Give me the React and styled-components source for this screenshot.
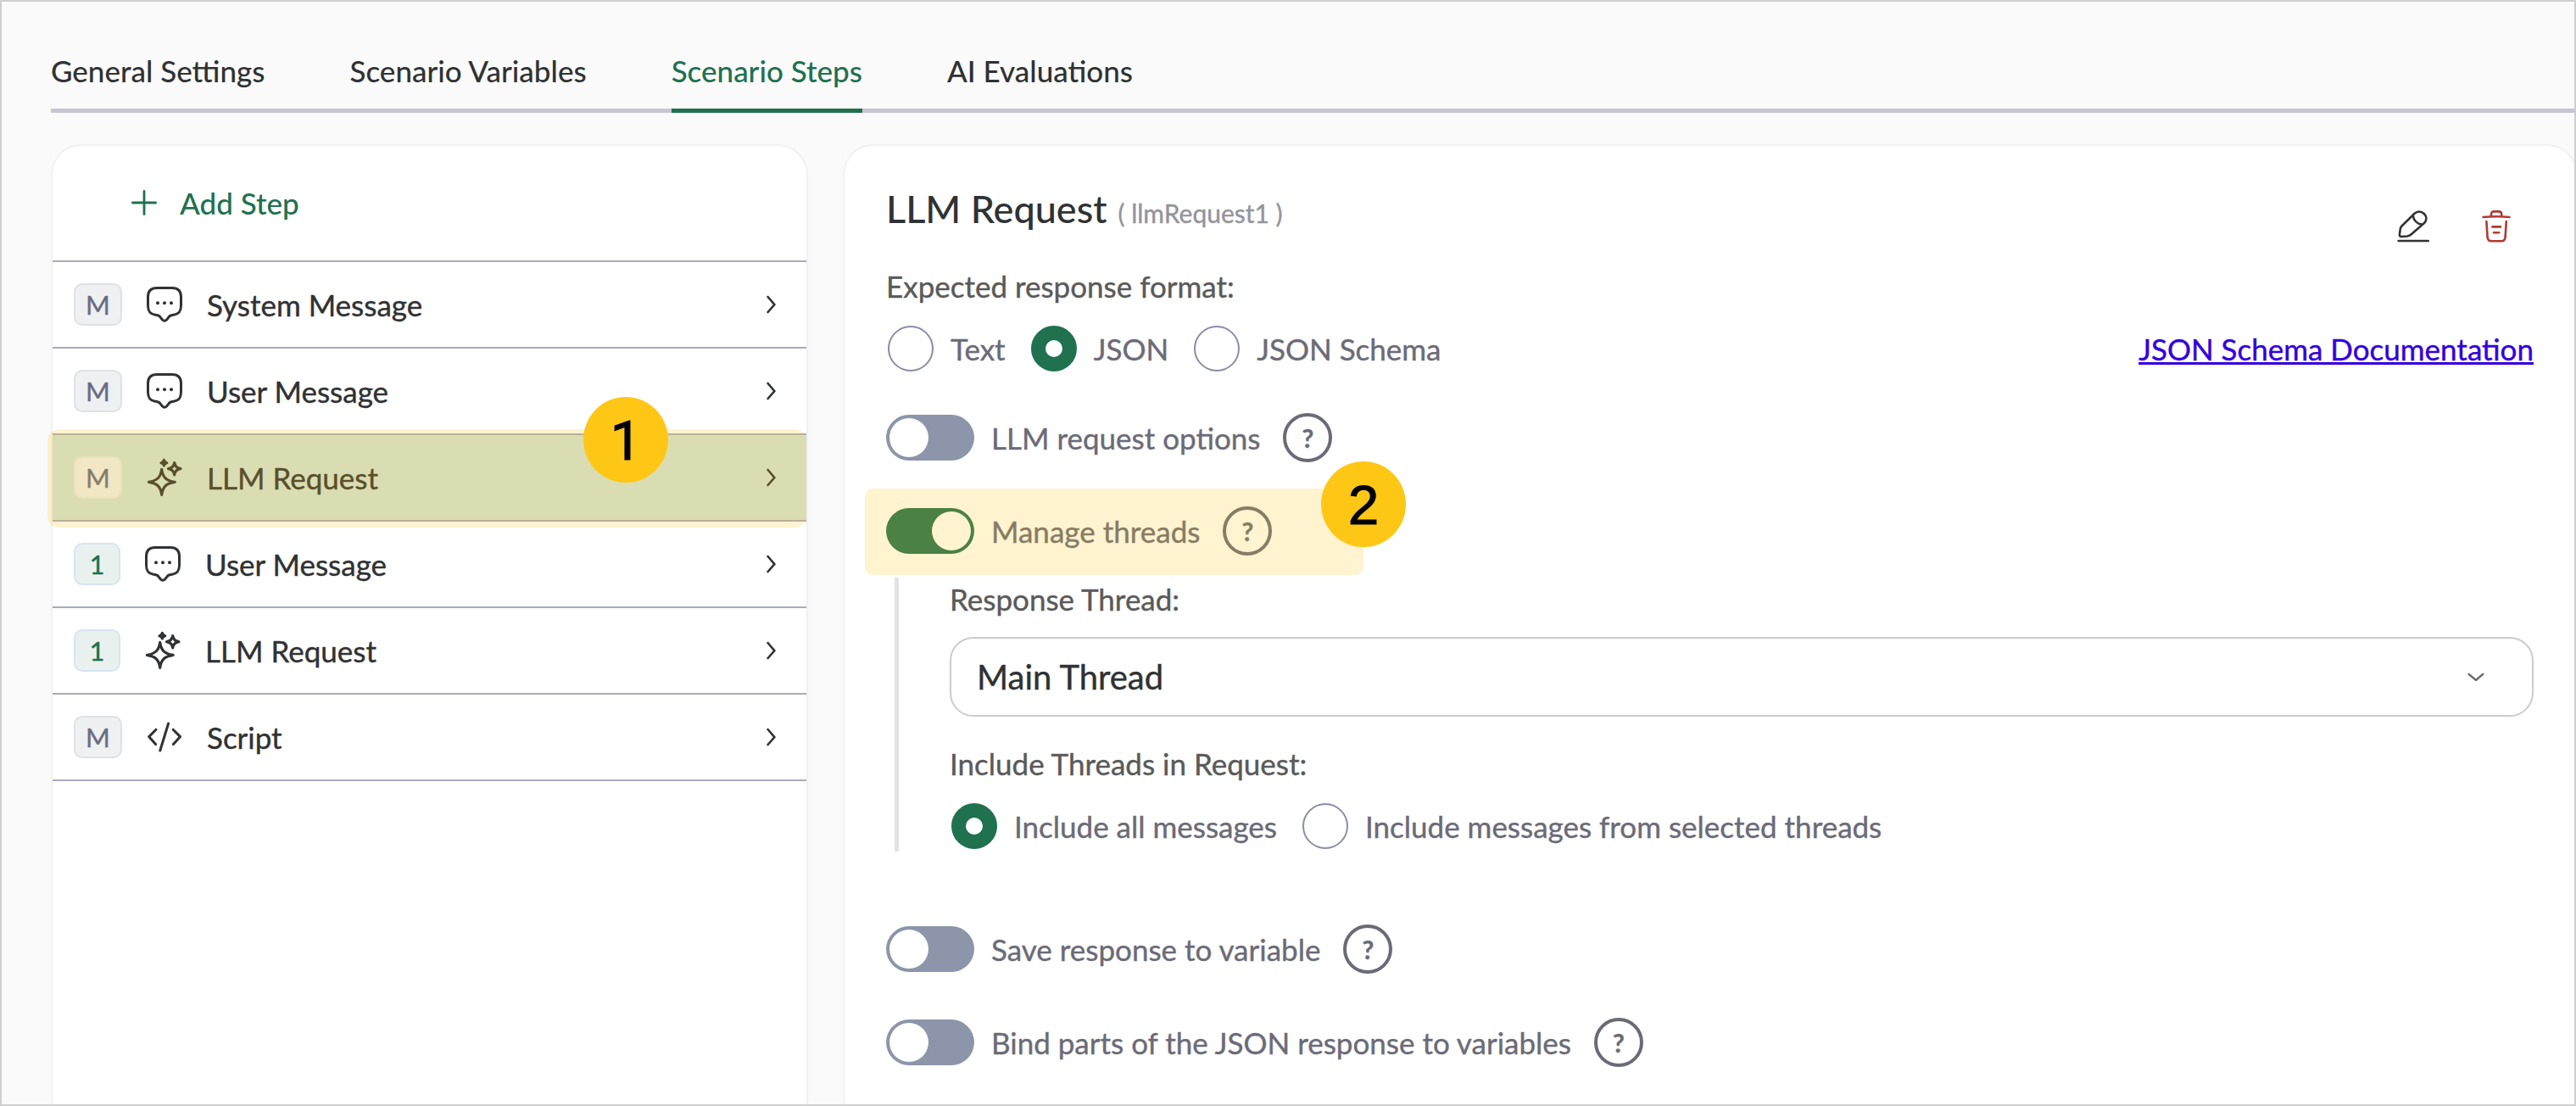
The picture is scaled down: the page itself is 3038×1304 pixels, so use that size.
import React from 'react';
import styled, { createGlobalStyle } from 'styled-components';

const tabs = ['General Settings', 'Scenario Variables', 'Scenario Steps', 'AI Evaluations'];

const steps = [
    { thread: 'M', icon: 'chat', name: 'System Message' },
    { thread: 'M', icon: 'chat', name: 'User Message' },
    { thread: 'M', icon: 'sparkle', name: 'LLM Request', selected: true },
    { thread: '1', icon: 'chat', name: 'User Message' },
    { thread: '1', icon: 'sparkle', name: 'LLM Request' },
    { thread: 'M', icon: 'code', name: 'Script' },
];

const ChatIcon = () => (
    <svg width='42' height='42' viewBox='0 0 42 42' fill='none' stroke='currentColor' strokeWidth='3'>
        <path d='M12 1.5H30C37 1.5 40.5 5 40.5 12V22C40.5 30 37.5 32.5 32 33.2C29 33.6 27.5 33.6 26 35.8L23.5 39C22 40.7 20 40.7 18.5 39L16 35.8C14.5 33.6 13 33.6 10 33.2C4.5 32.5 1.5 30 1.5 22V12C1.5 5 5 1.5 12 1.5Z' />
        <g fill='currentColor' stroke='none'>
            <circle cx='13' cy='19.3' r='2' />
            <circle cx='21' cy='19.3' r='2' />
            <circle cx='29' cy='19.3' r='2' />
        </g>
    </svg>
);

const SparkleIcon = () => (
    <svg width='42' height='46' viewBox='0 0 42 46' fill='none' stroke='currentColor' strokeWidth='3.2' strokeLinejoin='round'>
        <path d='M17.7 13.4C18.8 22 22.5 26.8 33.2 28.3C22.5 29.8 18.8 34.4 17.7 43.4C16.6 34.4 12.9 29.8 2.4 28.3C12.9 26.8 16.6 22 17.7 13.4Z' />
        <path d='M32.7 5.6C33.3 9.8 35 12 39.9 12.7C35 13.4 33.3 15.6 32.7 19.9C32.1 15.6 30.4 13.4 25.5 12.7C30.4 12 32.1 9.8 32.7 5.6Z' />
        <path d='M20.4 2.4C20.8 4.4 21.8 5.3 23.8 5.7C21.8 6.1 20.8 7 20.4 9C20 7 19 6.1 17 5.7C19 5.3 20 4.4 20.4 2.4Z' fill='currentColor' />
    </svg>
);

const CodeIcon = () => (
    <svg width='42' height='42' viewBox='0 0 42 42' fill='none' stroke='currentColor' strokeWidth='3' strokeLinecap='round' strokeLinejoin='round'>
        <path d='M11 12.2L2.6 20.6L10.6 29.6M31.2 12.2L39.6 20.6L31.4 29.6M25.6 5L15.8 37' />
    </svg>
);

const ChevronRight = () => (
    <svg width='11' height='22' viewBox='0 0 11 22' fill='none' stroke='currentColor' strokeWidth='2.6' strokeLinecap='round' strokeLinejoin='round'>
        <path d='M1.6 2L9.4 11.2L1.6 20' />
    </svg>
);

const ChevronDown = () => (
    <svg width='20' height='11' viewBox='0 0 20 11' fill='none' stroke='#66666a' strokeWidth='2.4' strokeLinecap='round' strokeLinejoin='round'>
        <path d='M1.6 1.8L10 8.8L18.2 1.8' />
    </svg>
);

const PlusIcon = () => (
    <svg width='30' height='30' viewBox='0 0 30 30' fill='none' stroke='currentColor' strokeWidth='2.8' strokeLinecap='round'>
        <path d='M15 1.4V28.6M1.4 15H28.6' />
    </svg>
);

const EditIcon = () => (
    <svg width='38' height='38' viewBox='0 0 38 38' fill='none' stroke='#303234' strokeWidth='2.6' strokeLinecap='round' strokeLinejoin='round'>
        <path d='M5.5 18.5L20.5 3.8C24 .6 28.5 .9 31.8 4C35 7.2 35.3 11.5 32 15L16.5 28.5C15 29.8 14 30.2 12 30.5L5 31C3.5 31 2.8 30.2 2.9 28.8L3.8 21.8C4 20.2 4.5 19.5 5.5 18.5Z' />
        <path d='M18.8 6.5C19.5 12 24 16 28.8 16.5M1.6 36H36.8' />
    </svg>
);

const TrashIcon = () => (
    <svg width='34' height='38' viewBox='0 0 34 38' fill='none' stroke='#b03a33' strokeWidth='2.6' strokeLinecap='round' strokeLinejoin='round'>
        <path d='M1.5 8Q17 6.6 32.5 8M11 7V4.6C11 2.4 12 1.4 14.2 1.4H20C22.2 1.4 23.2 2.4 23.2 4.6V7' />
        <path d='M5.4 13L6.6 31.6C6.9 34.8 8.4 36.3 11.4 36.3H22.8C25.8 36.3 27.3 34.8 27.6 31.6L28.8 13M12.4 19.4H22M14 26.2H20.2' />
    </svg>
);

const icons = { chat: ChatIcon, sparkle: SparkleIcon, code: CodeIcon };

const StepRow = ({ thread, icon, name, selected }) => {
    const Icon = icons[icon];
    return (
        <Row $selected={selected}>
            <ThreadBadge $main={thread === 'M'} $selected={selected}>{thread}</ThreadBadge>
            <StepIcon><Icon /></StepIcon>
            <StepName>{name}</StepName>
            <ChevronRight />
            {selected && <StepHighlight />}
            {selected && <StepMarker>1</StepMarker>}
        </Row>
    );
};

const RadioOption = ({ label, checked }) => (
    <RadioLabel>
        <Radio $checked={checked} />
        {label}
    </RadioLabel>
);

const ToggleRow = ({ label, on, children }) => (
    <ToggleLine>
        <Toggle $on={on}><Knob /></Toggle>
        <ToggleLabel>{label}</ToggleLabel>
        <Help>?</Help>
        {children}
    </ToggleLine>
);

const App = () => {
    return (
        <Window>
            <GlobalStyle />
            <TabBar>
                {tabs.map(tab => (
                    <Tab key={tab} $active={tab === 'Scenario Steps'}>{tab}</Tab>
                ))}
            </TabBar>
            <Content>
                <StepPanel>
                    <AddStep>
                        <PlusIcon />
                        Add Step
                    </AddStep>
                    {steps.map((step, i) => <StepRow key={i} {...step} />)}
                </StepPanel>
                <DetailPanel>
                    <DetailHeader>
                        <Title>LLM Request</Title>
                        <StepId>( llmRequest1 )</StepId>
                        <Actions>
                            <EditIcon />
                            <TrashIcon />
                        </Actions>
                    </DetailHeader>
                    <FieldLabel>Expected response format:</FieldLabel>
                    <FormatRow>
                        <RadioOption label='Text' />
                        <RadioOption label='JSON' checked />
                        <RadioOption label='JSON Schema' />
                        <DocLink href='#'>JSON Schema Documentation</DocLink>
                    </FormatRow>
                    <Toggles>
                        <ToggleRow label='LLM request options' />
                        <ToggleRow label='Manage threads' on>
                            <ToggleHighlight />
                            <ToggleMarker>2</ToggleMarker>
                        </ToggleRow>
                    </Toggles>
                    <ThreadOptions>
                        <FieldLabel>Response Thread:</FieldLabel>
                        <Select>
                            Main Thread
                            <ChevronDown />
                        </Select>
                        <FieldLabel>Include Threads in Request:</FieldLabel>
                        <ThreadRadios>
                            <RadioOption label='Include all messages' checked />
                            <RadioOption label='Include messages from selected threads' />
                        </ThreadRadios>
                    </ThreadOptions>
                    <Toggles>
                        <ToggleRow label='Save response to variable' />
                        <ToggleRow label='Bind parts of the JSON response to variables' />
                    </Toggles>
                </DetailPanel>
            </Content>
        </Window>
    );
};

export default App;

const GlobalStyle = createGlobalStyle`
    * {
        box-sizing: border-box;
    }
    body {
        margin: 0;
        font-family: Lato, 'Open Sans', sans-serif;
        font-size: 35px;
        line-height: 42px;
        color: #303234;
        -webkit-text-stroke: .4px;
    }
    svg {
        display: block;
        flex: none;
    }
`;

const Window = styled.div`
    height: 1304px;
    display: flex;
    flex-direction: column;
    overflow: hidden;
    border: 2px solid #cfcfcf;
    background: #fafafa;
`;

const TabBar = styled.nav`
    display: flex;
    flex: none;
    gap: 100px;
    margin: 60px 0 0 58px;
    box-shadow: inset 0 -5px #c5c5d3;
`;

const Tab = styled.div`
    padding-bottom: 24px;
    border-bottom: 5px solid ${p => p.$active ? '#217050' : 'transparent'};
    color: ${p => p.$active ? '#217050' : '#303234'};
    font-weight: 500;
    -webkit-text-stroke: 0;
`;

const Content = styled.main`
    flex: 1;
    display: flex;
    gap: 41px;
    margin: 37px -4px 0 58px;
`;

const Panel = styled.section`
    border: 2px solid #f1f1f3;
    border-bottom: none;
    border-radius: 36px 36px 0 0;
    background: #fff;
`;

const StepPanel = styled(Panel)`
    width: 893px;
    flex: none;
`;

const AddStep = styled.div`
    display: flex;
    align-items: center;
    gap: 27px;
    height: 137px;
    padding: 0 0 1px 93px;
    border-bottom: 2px solid #a9abbb;
    color: #1f7150;
    font-weight: 500;
    -webkit-text-stroke: 0;
`;

const Row = styled.div`
    position: relative;
    display: flex;
    align-items: center;
    height: 102px;
    padding: 0 36px 0 25px;
    border-bottom: 2px solid #a9abbb;
    background: ${p => p.$selected ? '#d1e4d9' : 'transparent'};
`;

const ThreadBadge = styled.span`
    display: flex;
    align-items: center;
    justify-content: center;
    width: ${p => p.$main ? 57 : 55}px;
    height: 50px;
    border: 2px solid ${p => p.$selected ? '#e6eae6' : p.$main ? '#dfe1e4' : '#d8e4f1'};
    border-radius: 10px;
    background: ${p => p.$main ? '#eef0f2' : '#e9f1ee'};
    color: ${p => p.$main ? '#6a6c80' : '#1f7150'};
    font-size: 31px;
`;

const StepIcon = styled.span`
    margin: 0 29px;
`;

const StepName = styled.span`
    flex: 1;
`;

const Highlight = styled.div`
    position: absolute;
    background: rgba(255, 197, 20, .2);
`;

const StepHighlight = styled(Highlight)`
    top: -7px;
    left: -6px;
    width: 895px;
    height: 116px;
    border-radius: 14px;
`;

const ToggleHighlight = styled(Highlight)`
    top: -21px;
    left: -25px;
    width: 588px;
    height: 102px;
    border-radius: 10px;
`;

const Marker = styled.div`
    position: absolute;
    display: flex;
    align-items: center;
    justify-content: center;
    width: 100px;
    height: 101px;
    padding-top: 2px;
    border-radius: 50%;
    background: #ffc715;
    color: #000;
    font-family: 'Liberation Sans', Arial, sans-serif;
    font-size: 65px;
    -webkit-text-stroke: 1.2px #000;
`;

const StepMarker = styled(Marker)`
    top: -45px;
    left: 626px;
    font-family: Roboto, Arial, sans-serif;
`;

const ToggleMarker = styled(Marker)`
    top: -53px;
    left: 513px;
`;

const DetailPanel = styled(Panel)`
    flex: 1;
    padding: 47px 50px 0 49px;
`;

const DetailHeader = styled.header`
    display: flex;
    align-items: baseline;
    height: 97px;
`;

const Title = styled.h1`
    margin: 0 13px 0 0;
    font-size: 45px;
    font-weight: 500;
    line-height: 54px;
    -webkit-text-stroke: 0;
`;

const StepId = styled.span`
    color: #94949c;
    font-size: 30px;
`;

const Actions = styled.div`
    display: flex;
    align-self: flex-start;
    gap: 62px;
    margin-left: auto;
    padding: 29px 27px 0 0;
`;

const FieldLabel = styled.div`
    color: #5a5a5a;
`;

const RadioGroup = styled.div`
    display: flex;
    align-items: center;
    gap: 30px;
    padding-left: 2px;
    color: #6b6b77;
`;

const FormatRow = styled(RadioGroup)`
    margin-top: 26px;
`;

const ThreadRadios = styled(RadioGroup)`
    margin-top: 26px;
`;

const RadioLabel = styled.label`
    display: flex;
    align-items: center;
    gap: 20px;
`;

const Radio = styled.span`
    width: 54px;
    height: 54px;
    border: ${p => p.$checked ? '17px solid #1f7150' : '2px solid #8a8ca8'};
    border-radius: 50%;
    background: #fff;
`;

const DocLink = styled.a`
    margin-left: auto;
    color: #3300dd;
    text-decoration-thickness: 3px;
`;

const Toggles = styled.div`
    display: flex;
    flex-direction: column;
    gap: 52px;
    margin-top: 49px;
`;

const ToggleLine = styled.div`
    position: relative;
    display: flex;
    align-items: center;
    height: 58px;
    color: #6b6b77;
`;

const Toggle = styled.span`
    display: flex;
    justify-content: ${p => p.$on ? 'flex-end' : 'flex-start'};
    width: 104px;
    height: 54px;
    padding: 4px;
    border-radius: 27px;
    background: ${p => p.$on ? '#1f7150' : '#8c95a9'};
`;

const Knob = styled.span`
    width: 46px;
    height: 46px;
    border-radius: 50%;
    background: #fff;
`;

const ToggleLabel = styled.span`
    margin: 0 27px 0 20px;
    padding-bottom: 1px;
`;

const Help = styled.span`
    display: flex;
    align-items: center;
    justify-content: center;
    width: 58px;
    height: 58px;
    border: 4px solid #6b6b77;
    border-radius: 50%;
    font-size: 30px;
    font-weight: 700;
`;

const ThreadOptions = styled.div`
    margin: 26px 0 86px 10px;
    padding: 4px 0 3px 60px;
    border-left: 5px solid #e3e3e6;

    & + div {
        margin-top: 0;
    }
`;

const Select = styled.div`
    display: flex;
    align-items: center;
    justify-content: space-between;
    height: 94px;
    margin: 24px 0 34px;
    padding: 0 56px 0 30px;
    border: 2px solid #ccc;
    border-radius: 28px;
    font-size: 40px;
`;
